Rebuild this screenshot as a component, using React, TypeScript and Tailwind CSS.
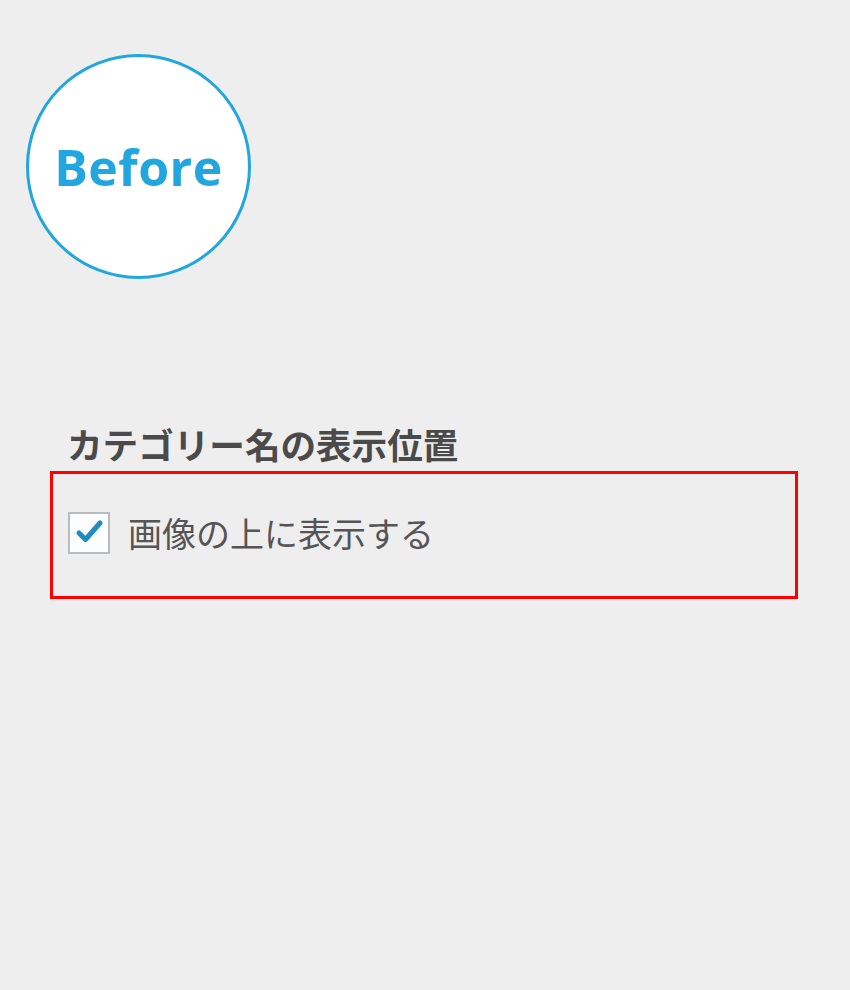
import React from "react";

export default function App() {
  return (
    <div className="w-[850px] h-[990px] bg-[#eeeeee] overflow-hidden">
      <div className="pt-[54px] pl-[26px]">
        <div className="w-[225px] h-[225px] rounded-full border-[3px] border-[#22a6e0] bg-white flex items-center justify-center">
          <span
            className="text-[50px] font-bold text-[#22a6e0] leading-none tracking-[0.5px]"
            style={{ fontFamily: '"Open Sans", sans-serif' }}
          >
            Before
          </span>
        </div>
      </div>
      <div className="pl-[67px] mt-[147px]">
        <div
          className="text-[35.6px] font-bold leading-none text-[#4a4a4a]"
          style={{ fontFamily: '"Noto Sans CJK JP", sans-serif' }}
        >
          カテゴリー名の表示位置
        </div>
      </div>
      <div className="ml-[50px] mt-[9px] w-[748px] h-[128px] border-[3px] border-[#ff0000] pl-[15px] pt-[38px]">
        <div className="flex items-center gap-[18px]">
          <div className="w-[42px] h-[42px] border-2 border-[#b9bcbf] bg-[#fbfdff] flex items-center justify-center">
            <svg width="30" height="30" viewBox="0 0 30 30">
              <path
                d="M5 15 L11.5 21.5 L26 5"
                fill="none"
                stroke="#1e8cbe"
                strokeWidth="5"
                strokeLinecap="round"
                strokeLinejoin="round"
              />
            </svg>
          </div>
          <span
            className="text-[34px] leading-none text-[#555555]"
            style={{ fontFamily: '"Noto Sans CJK JP", sans-serif' }}
          >
            画像の上に表示する
          </span>
        </div>
      </div>
    </div>
  );
}
